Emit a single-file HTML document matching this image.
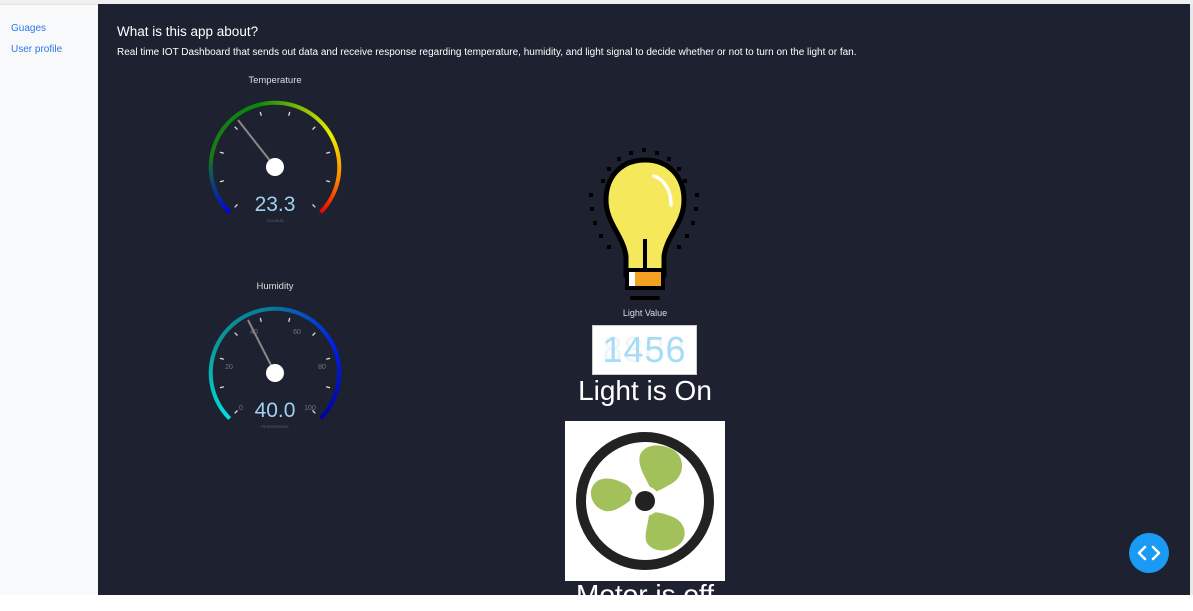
<!DOCTYPE html>
<html><head><meta charset="utf-8"><style>
*{margin:0;padding:0;box-sizing:border-box}
body{width:1193px;height:595px;overflow:hidden;background:#fff;font-family:"Liberation Sans",sans-serif;position:relative}
.side{position:absolute;left:0;top:4px;width:98px;height:591px;background:#f8f9fb;border-top:1px solid #e5e5e5}
.side a{position:absolute;left:11px;font-size:10px;color:#2a7ae2;text-decoration:none}
.main{position:absolute;left:98px;top:4px;width:1092px;height:591px;background:#1e2130}
.topbar{position:absolute;left:0;top:0;width:1193px;height:4px;background:#f0f0f0}
.t{position:absolute;color:#fff;white-space:nowrap}
.ring{position:absolute;width:136px;height:136px;border-radius:50%;
-webkit-mask:radial-gradient(circle,transparent 62px,#000 62.5px,#000 66px,transparent 66.5px);
mask:radial-gradient(circle,transparent 62px,#000 62.5px,#000 66px,transparent 66.5px)}
svg{position:absolute}
</style></head><body>
<div class="topbar"></div>
<div class="side">
<a style="top:18px">Guages</a>
<a style="top:39px">User profile</a>
</div>
<div class="main"></div>
<div class="t" style="left:117px;top:24px;font-size:13.5px">What is this app about?</div>
<div class="t" style="left:117px;top:47px;font-size:10px">Real time IOT Dashboard that sends out data and receive response regarding temperature, humidity, and light signal to decide whether or not to turn on the light or fan.</div>

<div class="t" style="left:225px;top:75px;width:100px;text-align:center;font-size:9.5px;color:#ddd">Temperature</div>
<div class="ring" style="left:207px;top:99px;background:conic-gradient(from 225deg,#0000ee 0deg,#1a7a1a 55deg,#0a8a0a 120deg,#eeee00 195deg,#ff8800 235deg,#ee0000 270deg,transparent 270deg)"></div>
<svg style="left:195px;top:87px" width="160" height="160" viewBox="-80 -80 160 160">
<g stroke="#ddd" stroke-width="1.3">
<g transform="rotate(-135)"><line y1="-57" y2="-53"/></g><g transform="rotate(-105)"><line y1="-57" y2="-53"/></g><g transform="rotate(-75)"><line y1="-57" y2="-53"/></g><g transform="rotate(-45)"><line y1="-57" y2="-53"/></g><g transform="rotate(-15)"><line y1="-57" y2="-53"/></g><g transform="rotate(15)"><line y1="-57" y2="-53"/></g><g transform="rotate(45)"><line y1="-57" y2="-53"/></g><g transform="rotate(75)"><line y1="-57" y2="-53"/></g><g transform="rotate(105)"><line y1="-57" y2="-53"/></g><g transform="rotate(135)"><line y1="-57" y2="-53"/></g>
</g>
<line x1="0" y1="0" x2="-37" y2="-47" stroke="#888" stroke-width="2"/>
<circle r="9" fill="#fff"/>
<text x="0" y="44" text-anchor="middle" font-size="21" fill="#9fd0f0" font-family="Liberation Sans">23.3</text>
<text x="0" y="55" text-anchor="middle" font-size="4" fill="#666" font-family="Liberation Sans">CELSIUS</text>
</svg>

<div class="t" style="left:225px;top:281px;width:100px;text-align:center;font-size:9.5px;color:#ddd">Humidity</div>
<div class="ring" style="left:207px;top:305px;background:conic-gradient(from 225deg,#00e0e0 0deg,#0a9a9a 70deg,#0a7a9a 130deg,#0020ee 200deg,#0000a0 270deg,transparent 270deg)"></div>
<svg style="left:195px;top:293px" width="160" height="160" viewBox="-80 -80 160 160">
<g stroke="#ddd" stroke-width="1.3">
<g transform="rotate(-135)"><line y1="-57" y2="-53"/></g><g transform="rotate(-105)"><line y1="-57" y2="-53"/></g><g transform="rotate(-75)"><line y1="-57" y2="-53"/></g><g transform="rotate(-45)"><line y1="-57" y2="-53"/></g><g transform="rotate(-15)"><line y1="-57" y2="-53"/></g><g transform="rotate(15)"><line y1="-57" y2="-53"/></g><g transform="rotate(45)"><line y1="-57" y2="-53"/></g><g transform="rotate(75)"><line y1="-57" y2="-53"/></g><g transform="rotate(105)"><line y1="-57" y2="-53"/></g><g transform="rotate(135)"><line y1="-57" y2="-53"/></g>
</g>
<g font-size="7" fill="#777" font-family="Liberation Sans" text-anchor="middle">
<text x="-34" y="37">0</text><text x="-46" y="-4">20</text><text x="-21" y="-39">40</text><text x="22" y="-39">60</text><text x="47" y="-4">80</text><text x="35" y="37">100</text>
</g>
<line x1="0" y1="0" x2="-27" y2="-53" stroke="#888" stroke-width="2"/>
<circle r="9" fill="#fff"/>
<text x="0" y="44" text-anchor="middle" font-size="21" fill="#9fd0f0" font-family="Liberation Sans">40.0</text>
<text x="0" y="55" text-anchor="middle" font-size="4" fill="#666" font-family="Liberation Sans">PERCENTAGE</text>
</svg>

<svg style="left:585px;top:143px" width="120" height="162" viewBox="0 0 120 162">
<g fill="#000">
<rect x="57" y="5" width="4" height="4"/><rect x="44" y="8" width="4" height="4"/><rect x="70" y="8" width="4" height="4"/><rect x="32" y="14" width="4" height="4"/><rect x="82" y="14" width="4" height="4"/><rect x="22" y="24" width="4" height="4"/><rect x="92" y="24" width="4" height="4"/><rect x="16" y="36" width="4" height="4"/><rect x="98" y="36" width="4" height="4"/><rect x="4" y="50" width="4" height="4"/><rect x="110" y="50" width="4" height="4"/><rect x="5" y="64" width="4" height="4"/><rect x="109" y="64" width="4" height="4"/><rect x="8" y="78" width="4" height="4"/><rect x="106" y="78" width="4" height="4"/><rect x="14" y="91" width="4" height="4"/><rect x="100" y="91" width="4" height="4"/><rect x="22" y="102" width="4" height="4"/><rect x="92" y="102" width="4" height="4"/>
</g>
<path d="M60 17 C35 17 21 35 21 57 C21 80 38 92 41 113 L41 132 L79 132 L79 113 C82 92 99 80 99 57 C99 35 85 17 60 17Z" fill="#f5e85a" stroke="#000" stroke-width="5"/>
<path d="M69 33 C80 37 86 48 86 62" fill="none" stroke="#fff" stroke-width="3.5" stroke-linecap="round"/>
<rect x="42" y="127" width="36" height="18" fill="#f4a020" stroke="#000" stroke-width="4"/>
<rect x="44" y="129" width="6" height="14" fill="#fff"/>
<line x1="60" y1="96" x2="60" y2="128" stroke="#000" stroke-width="4"/>
<line x1="47" y1="155" x2="73" y2="155" stroke="#000" stroke-width="4" stroke-linecap="round"/>
</svg>
<div class="t" style="left:595px;top:308px;width:100px;text-align:center;font-size:9px;color:#ddd">Light Value</div>
<div style="position:absolute;left:592px;top:325px;width:105px;height:50px;background:#fff;border:1px solid #ccc"></div>
<div class="t" style="left:592px;top:325px;width:105px;height:50px;text-align:center;font:36px/50px 'Liberation Sans',sans-serif;color:#f2f4f6;letter-spacing:1px">8888</div>
<div class="t" style="left:592px;top:325px;width:105px;height:50px;text-align:center;font:36px/50px 'Liberation Sans',sans-serif;color:#a6dcf8;letter-spacing:1px">1456</div>
<div class="t" style="left:545px;top:375px;width:200px;text-align:center;font-size:28px">Light is On</div>

<div style="position:absolute;left:565px;top:421px;width:160px;height:160px;background:#fff"></div>
<svg style="left:565px;top:421px" width="160" height="160" viewBox="0 0 160 160">
<circle cx="80" cy="80" r="64" fill="none" stroke="#222" stroke-width="10"/>
<g fill="#a3c15a">
<path d="M86 68 C80 56 72 44 75 34 C80 22 98 22 110 30 C122 40 118 58 104 64 C98 68 92 70 88 72Z"/>
<path d="M70 76 C62 82 50 92 40 90 C26 86 22 70 30 62 C38 54 52 58 62 64 C66 68 68 72 70 76Z"/>
<path d="M84 92 C84 102 78 114 82 122 C88 132 106 132 116 122 C124 112 118 100 108 96 C98 92 90 90 84 92Z"/>
</g>
<circle cx="80" cy="80" r="15" fill="#fff"/>
<circle cx="80" cy="80" r="10" fill="#222"/>
</svg>
<div class="t" style="left:545px;top:579px;width:200px;text-align:center;font-size:28px">Motor is off</div>

<div style="position:absolute;left:1129px;top:533px;width:40px;height:40px;border-radius:50%;background:#1a9af5"></div>
<svg style="left:1129px;top:533px" width="40" height="40"><path d="M16 14 L10 20 L16 26 M24 14 L30 20 L24 26" fill="none" stroke="#fff" stroke-width="2.5" stroke-linecap="round" stroke-linejoin="round"/></svg>
<div style="position:absolute;left:1190px;top:4px;width:3px;height:591px;background:#e8e8e8"></div>
</body></html>
